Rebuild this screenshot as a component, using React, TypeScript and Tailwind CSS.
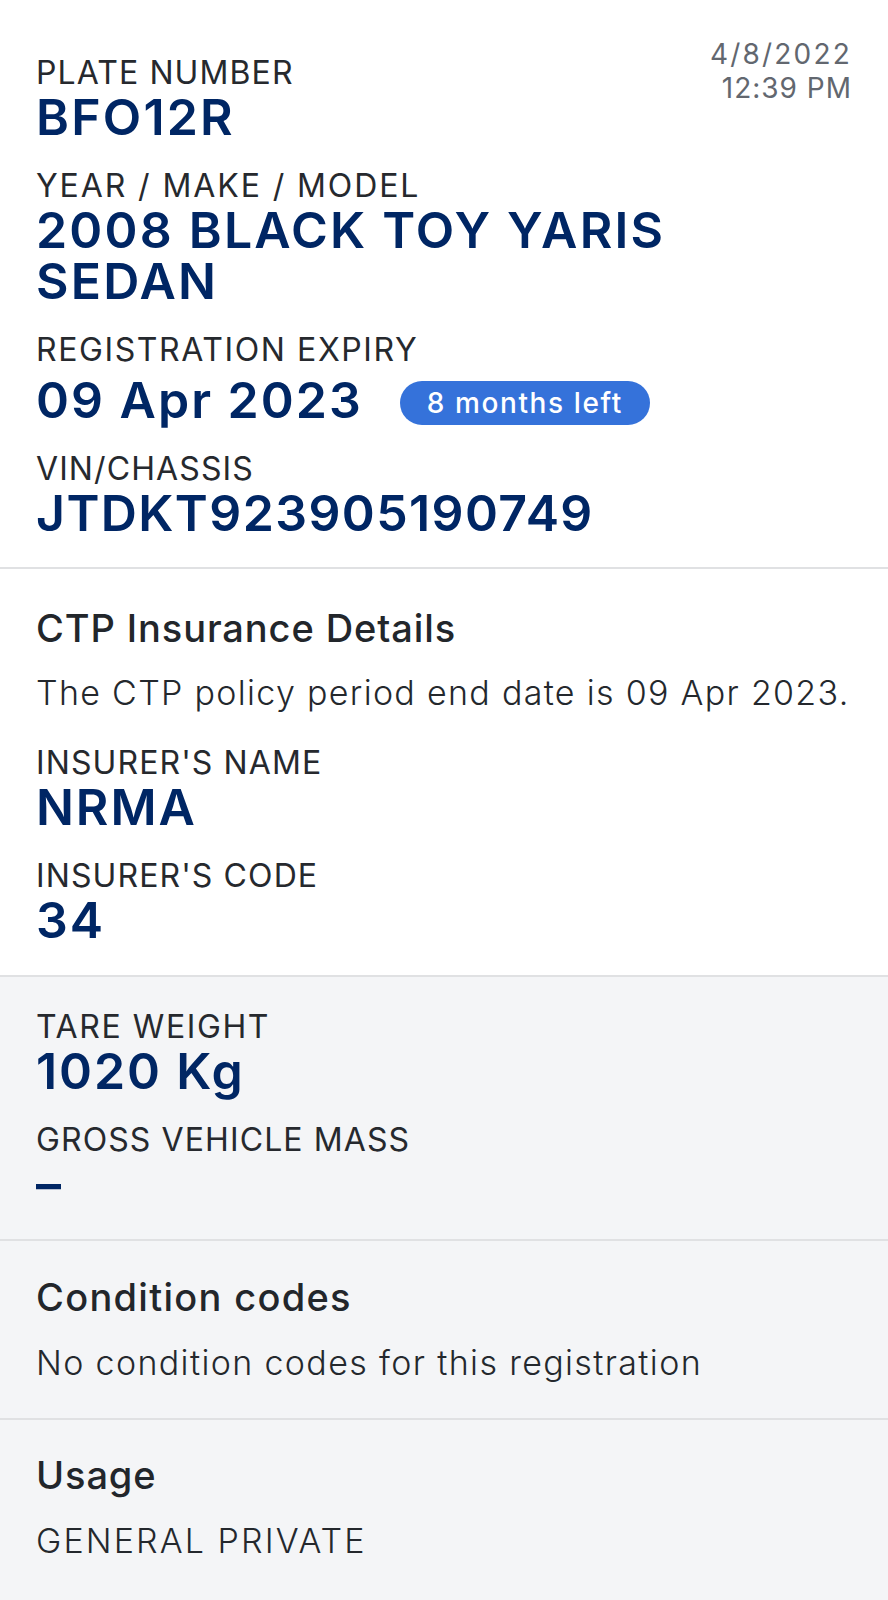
import React from "react";

type FieldProps = {
  label: string;
  value?: React.ReactNode;
  className?: string;
  labelTrack?: string;
  valueTrack?: string;
};

// label on top, big navy value underneath
const Field: React.FC<FieldProps> = ({ label, value, className, labelTrack, valueTrack }) => {
  return (
    <div className={className}>
      <div className={"text-[32px] leading-[39px] text-[#26292e] " + (labelTrack ?? "tracking-[1.1px]")}>{label}</div>
      <div className={"text-[50px] leading-[51px] font-semibold text-[#002664] " + (valueTrack ?? "tracking-[1.9px]")}>
        {value}
      </div>
    </div>
  );
};

const Section: React.FC<{ className?: string; children: React.ReactNode }> = ({ className, children }) => {
  return <section className={"px-[36px] border-b-2 border-[#e0e1e3] " + (className ?? "")}>{children}</section>;
};

const Title: React.FC<{ children: React.ReactNode; className?: string }> = ({ children, className }) => (
  <h2 className={"text-[38px] leading-[46px] font-medium text-[#22262b] " + (className ?? "tracking-[0.9px]")}>
    {children}
  </h2>
);

const Body: React.FC<{ children: React.ReactNode; className?: string }> = ({ children, className }) => (
  <p className={"text-[34px] leading-[44px] font-light text-[#24282d] " + (className ?? "")}>{children}</p>
);

export default function App() {
  return (
    <div className="min-h-screen bg-[#f4f5f7] font-[family-name:Inter,sans-serif]">
      <Section className="bg-white pt-[37px] pb-[28px]">
        <div className="flex justify-between items-start">
          <div className="flex-1 min-w-0 pt-[16px]">
            <Field label="PLATE NUMBER" value="BFO12R" valueTrack="tracking-[2.2px]" />
            <Field
              className="mt-[23px]"
              label="YEAR / MAKE / MODEL"
              labelTrack="tracking-[1.9px]"
              value="2008 BLACK TOY YARIS SEDAN"
              valueTrack="tracking-[2.2px]"
            />

            <div className="mt-[23px]">
              <div className="text-[32px] leading-[39px] tracking-[1.6px] text-[#26292e]">REGISTRATION EXPIRY</div>
              <div className="flex items-center gap-[37px] py-[6px]">
                <span className="text-[50px] leading-[51px] font-semibold tracking-[2px] text-[#002664]">09 Apr 2023</span>
                <span className="mt-[4px] rounded-full bg-[#3572da] px-[27px] text-[28px] leading-[44px] font-medium tracking-[1.6px] text-white">
                  8 months left
                </span>
              </div>
            </div>

            <Field className="mt-[17px]" label="VIN/CHASSIS" value="JTDKT923905190749" valueTrack="tracking-[1.4px]" />
          </div>

          <div className="shrink-0 text-right text-[28px] leading-[34px] text-[#62676f]">
            <div className="tracking-[2.2px]">4/8/2022</div>
            <div className="tracking-[1px]">12:39 PM</div>
          </div>
        </div>
      </Section>

      <Section className="bg-white pt-[36px] pb-[29px]">
        <Title>CTP Insurance Details</Title>
        <Body className="mt-[20px] tracking-[1.3px]">The CTP policy period end date is 09 Apr 2023.</Body>
        <Field className="mt-[28px]" label="INSURER'S NAME" value="NRMA" />
        <Field className="mt-[23px]" label="INSURER'S CODE" value="34" />
      </Section>

      <Section className="pt-[30px] pb-[29px]">
        <Field label="TARE WEIGHT" labelTrack="tracking-[1.6px]" value="1020 Kg" />
        <Field className="mt-[23px]" label="GROSS VEHICLE MASS" value="–" />
      </Section>

      <Section className="pt-[33px] pb-[33px]">
        <Title className="tracking-[1.3px]">Condition codes</Title>
        <Body className="mt-[21px] tracking-[1.35px]">No condition codes for this registration</Body>
      </Section>

      <section className="px-[36px] pt-[32px] pb-[36px]">
        <Title>Usage</Title>
        <Body className="mt-[21px] tracking-[2.1px]">GENERAL PRIVATE</Body>
      </section>
    </div>
  );
}
